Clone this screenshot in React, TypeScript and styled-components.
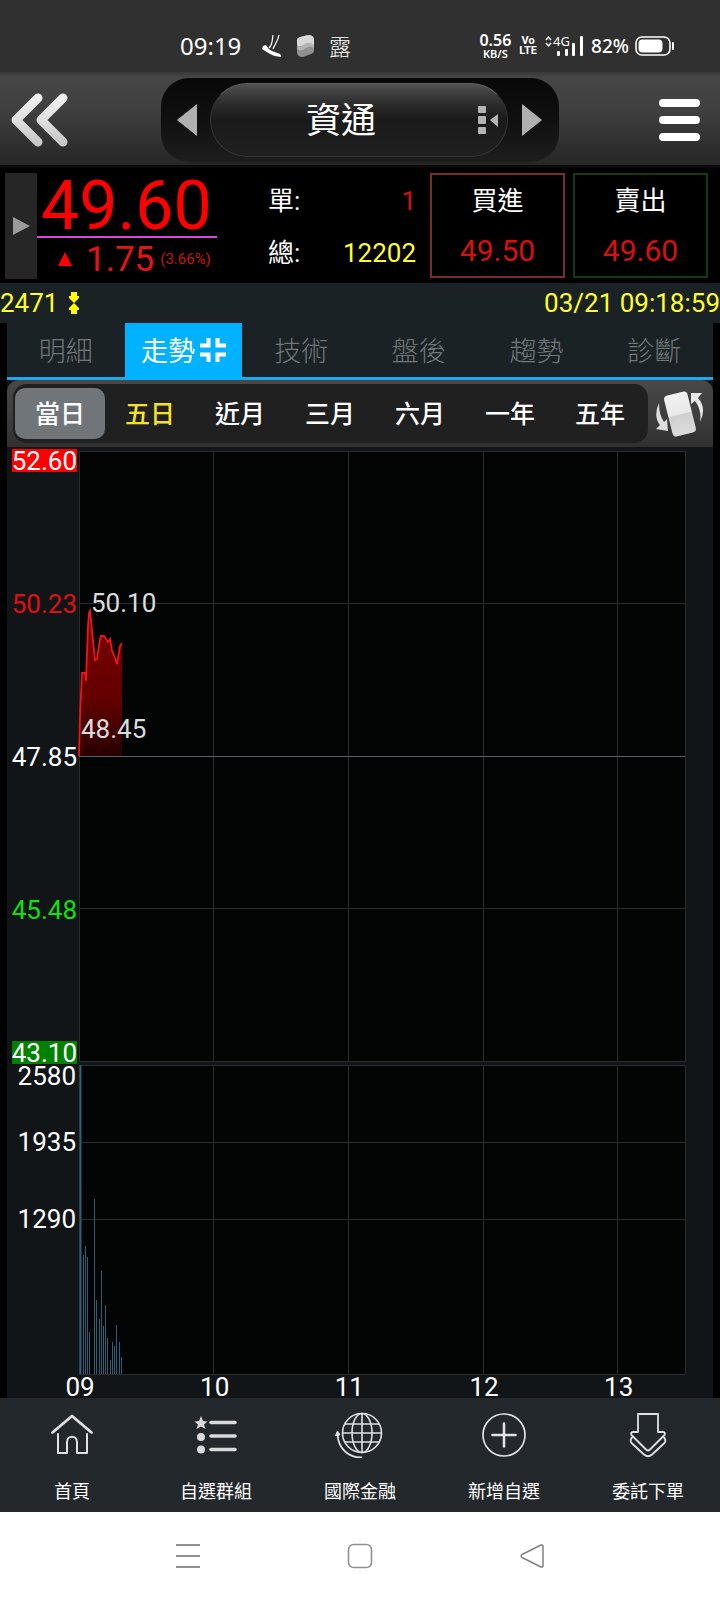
import React from "react";
import styled, { createGlobalStyle } from "styled-components";

const Global = createGlobalStyle`
  *, *::before, *::after { box-sizing: border-box; }
  body { margin: 0; background: #fff; }
  button { appearance: none; border: 0; padding: 0; margin: 0; background: none; color: inherit; font: inherit; cursor: pointer; }
  svg { display: block; flex: none; }
`;

const sans = `Roboto, "Noto Sans CJK TC", sans-serif`;

const Screen = styled.div`
  display: flex;
  flex-direction: column;
  min-height: 100vh;
  background: #000;
  color: #fff;
  font-family: ${sans};
`;

/* Status bar */
const StatusBar = styled.div`
  display: flex;
  align-items: flex-end;
  justify-content: space-between;
  height: 72px;
  padding: 0 46px 11px 180px;
  background: #303030;
  font-family: "Noto Sans", "Noto Sans CJK TC", sans-serif;
`;
const StatusGroup = styled.div<{ $gap: number }>`
  display: flex;
  align-items: center;
  gap: ${(p) => p.$gap}px;
  height: 30px;
`;
const Clock = styled.span`
  font-size: 24px;
  line-height: 30px;
  width: 68px;
`;
const Notice = styled.span`
  font-size: 22px;
  font-weight: 300;
  line-height: 30px;
`;
const Stack = styled.div`
  display: flex;
  flex-direction: column;
  align-items: center;
  font-weight: 600;
`;
const Small = styled.span<{ $size: number; $line: number }>`
  font-size: ${(p) => p.$size}px;
  line-height: ${(p) => p.$line}px;
`;
const Lte = styled(Stack)`
  font-family: "Liberation Sans Narrow", Roboto, sans-serif;
  font-weight: 700;
  font-size: 11px;
  line-height: 10px;
`;
const Signal = styled.div`
  display: flex;
  align-items: center;
  position: relative;
  width: 38px;
  height: 22px;
`;
const Network = styled.span`
  position: absolute;
  left: 8px;
  top: 0;
  font-size: 13px;
  line-height: 12px;
`;
const Battery = styled.div`
  display: flex;
  align-items: center;
  gap: 6px;
  font-size: 19px;
  font-weight: 500;
  line-height: 24px;
`;

/* Title bar */
const TitleBar = styled.header`
  display: grid;
  grid-template-columns: 1fr minmax(0, 398px) 1fr;
  align-items: center;
  height: 96px;
  border-bottom: 3px solid #0a0a0a;
  padding-top: 2px;
  background: linear-gradient(#383838, #464646 6%, #404040 40%, #262626);
`;
const IconButton = styled.button`
  display: flex;
`;
const BackButton = styled(IconButton)`
  justify-self: start;
  margin-left: 10px;
`;
const MenuButton = styled(IconButton)`
  justify-self: end;
  margin-right: 19px;
`;
const Well = styled.div`
  display: flex;
  align-items: center;
  justify-content: space-between;
  height: 84px;
  padding: 0 17px 0 16px;
  border-radius: 28px;
  background: linear-gradient(#080808, #121212 60%, #1e1e1e);
`;
const Pill = styled.button`
  display: flex;
  align-items: center;
  flex: 1;
  height: 74px;
  margin: 0 14px 0 13px;
  padding-right: 9px;
  border-radius: 37px;
  border: 1px solid #333;
  border-top-color: #606060;
  background: linear-gradient(#505050, #2c2c2c 28%, #1a1a1a 50%, #202020);
  font-size: 35px;
  line-height: 48px;
`;
const PillName = styled.span`
  flex: 1;
  margin-right: 7px;
  padding-top: 4px;
  text-align: center;
`;

/* Quote */
const Quote = styled.section`
  display: flex;
  height: 115px;
  padding: 5px 12px 4px 5px;
`;
const Handle = styled.button`
  display: flex;
  align-items: center;
  justify-content: center;
  width: 32px;
  background: #262626;
`;
const PriceBox = styled.div`
  width: 180px;
  color: #f00;
`;
const Price = styled.div`
  height: 65px;
  border-bottom: 2px solid #d848d8;
  padding-left: 4px;
  font-size: 68px;
  line-height: 66px;
`;
const Change = styled.div`
  display: flex;
  align-items: center;
  height: 42px;
  padding-left: 20px;
  color: #e81414;
`;
const ChangeValue = styled.span`
  margin: 0 6px 0 13px;
  font-size: 35px;
  line-height: 42px;
  padding-top: 2px;
`;
const Percent = styled.span`
  font-size: 15px;
  line-height: 20px;
  color: #c81414;
`;
const Volumes = styled.dl`
  flex: 1;
  display: flex;
  flex-direction: column;
  gap: 12px;
  margin: 0;
  padding: 8px 14px 0 51px;
  font-size: 26px;
  line-height: 40px;
`;
const VolumeRow = styled.div`
  display: flex;
  justify-content: space-between;
`;
const VolumeName = styled.dt``;
const VolumeValue = styled.dd<{ $color: string }>`
  margin: 0;
  color: ${(p) => p.$color};
`;
const Deal = styled.button<{ $border: string }>`
  display: flex;
  flex-direction: column;
  align-items: center;
  gap: 10px;
  width: 135px;
  height: 105px;
  padding-top: 6px;
  border: 2px solid ${(p) => p.$border};
  font-size: 26px;
  line-height: 40px;
  & + & { margin-left: 8px; }
`;
const DealPrice = styled.span`
  font-size: 30px;
  color: #d81010;
`;

const InfoBar = styled.div`
  display: flex;
  align-items: center;
  height: 40px;
  background: #1b2226;
  color: #ffff28;
  font-size: 26px;
  line-height: 40px;
`;
const Stamp = styled.time`
  margin-left: auto;
`;
const Code = styled.span`
  margin-right: 11px;
`;

/* Panel */
const Panel = styled.main`
  margin: 0 7px;
  background: #111518;
`;
const Tabs = styled.nav`
  display: flex;
  height: 57px;
  border-bottom: 3px solid #1eaaea;
  background: #1b2226;
`;
const Tab = styled.button<{ $on?: boolean }>`
  display: flex;
  flex: 1;
  align-items: center;
  justify-content: center;
  gap: 5px;
  height: ${(p) => (p.$on ? 57 : 54)}px;
  padding-bottom: ${(p) => (p.$on ? 3 : 0)}px;
  background: ${(p) => (p.$on ? "#00b2ff" : "none")};
  color: ${(p) => (p.$on ? "#fff" : "#70777a")};
  font-size: 27px;
  font-weight: ${(p) => (p.$on ? 400 : 300)};
  line-height: 40px;
`;
const TabText = styled.span`
  padding-top: 3px;
`;
const RangeBar = styled.div`
  display: flex;
  height: 67px;
  padding: 4px 8px 4px 6px;
  border-radius: 12px 12px 0 0;
  background: linear-gradient(#484848, #3c3c3c 60%, #303030);
`;
const Ranges = styled.div`
  display: flex;
  flex: 1;
  height: 59px;
  padding: 4px 3px 4px 2px;
  border-radius: 14px;
  background: #202020;
`;
const Range = styled.button<{ $on?: boolean; $color?: string }>`
  flex: 1;
  padding-top: 3px;
  border-radius: 10px;
  background: ${(p) => (p.$on ? "#70757a" : "none")};
  color: ${(p) => p.$color || "#fff"};
  font-size: 25px;
  font-weight: 500;
  line-height: 48px;
`;
const Rotate = styled.button`
  display: flex;
  align-items: center;
  margin-left: 7px;
`;

/* Chart */
const Chart = styled.section`
  display: grid;
  grid-template-columns: 72px 1fr 28px;
  padding-top: 2px;
  font-size: 26px;
`;
const Axis = styled.div`
  display: flex;
  flex-direction: column;
  align-items: flex-end;
  padding-right: 2px;
`;
const Tick = styled.div<{ $h: number; $at: string; $color?: string; $inset?: boolean }>`
  display: flex;
  align-items: ${(p) => p.$at};
  height: ${(p) => p.$h}px;
  padding-right: ${(p) => (p.$inset ? 1 : 0)}px;
  color: ${(p) => p.$color || "#fff"};
`;
const TickText = styled.span<{ $bg?: string }>`
  padding-top: 2px;
  line-height: 21px;
  background: ${(p) => p.$bg || "none"};
`;
const Plot = styled.div<{ $top: number }>`
  position: relative;
  grid-column: 2;
  padding-top: ${(p) => p.$top}px;
`;
const PlotSvg = styled.svg`
  width: 100%;
  overflow: visible;
`;
const Mark = styled.span<{ $x: number; $y: number }>`
  position: absolute;
  left: ${(p) => p.$x}px;
  top: ${(p) => p.$y}px;
  line-height: 24px;
  color: #dcdcdc;
`;
const Hours = styled.div`
  grid-column: 2;
  display: grid;
  grid-template-columns: repeat(4, 2fr) 1fr;
  height: 24px;
`;
const Hour = styled.span`
  width: 34px;
  margin-left: -16px;
  text-align: center;
  line-height: 27px;
`;

/* Bottom bars */
const BottomNav = styled.nav`
  display: flex;
  height: 114px;
  background: #23282c;
`;
const NavItem = styled.button`
  display: flex;
  flex: 1;
  flex-direction: column;
  align-items: center;
  padding-top: 14px;
  gap: 21px;
  color: #fff;
  font-size: 18px;
  line-height: 26px;
`;
const SystemNav = styled.nav`
  display: flex;
  justify-content: center;
  align-items: center;
  gap: 146px;
  height: 88px;
  background: #fff;
`;

const hourLines = [0, 134.67, 269.33, 404, 538.67, 606];

function Grid({ height, rows }: { height: number; rows: number[] }) {
  return (
    <g stroke="#292c2d" strokeWidth="1" shapeRendering="crispEdges">
      <rect x="0" y="0" width="606" height={height} fill="#030504" vectorEffect="non-scaling-stroke" />
      {hourLines.map((x) => (
        <line key={x} x1={x} x2={x} y1="0" y2={height} vectorEffect="non-scaling-stroke" />
      ))}
      {rows.map((y) => (
        <line key={y} x1="0" x2="606" y1={y} y2={y} vectorEffect="non-scaling-stroke" />
      ))}
    </g>
  );
}

const pricePath =
  "0,305 1,265 3,222 6,222 7,230 9,175 10,162 11,160 13,180 16,209 18,208 21,188 22,185 25,185 29,191 31,188 33,200 35,204 38,213 41,195 43,192";

const volumeBars = [
  [1, 309], [4, 119], [6, 128], [8, 117], [10, 42], [15, 175], [17, 74], [20, 55],
  [22, 103], [24, 48], [26, 69], [28, 36], [31, 14], [33, 32], [35, 28], [37, 49], [40, 32], [42, 17],
];

const navStroke = { fill: "none", stroke: "#dfe1e3", strokeWidth: 2 } as const;

const HomeIcon = () => (
  <svg width="46" height="46" viewBox="0 0 46 46" {...navStroke} strokeLinecap="round" strokeLinejoin="round">
    <path d="M3.500 20.500 23 4 42.500 20.500" strokeWidth="2.800" />
    <path d="M9 22V41H18V30C18 23 28 23 28 30V41H38V22" />
  </svg>
);
const ListIcon = () => (
  <svg width="46" height="46" viewBox="0 0 46 46" fill="#d8dadc">
    <path d="M8 4 10 9 14.500 9.500 11 12.500 12.500 17 8 14.500 3.500 17 5 12.500 1.500 9.500 6 9Z" />
    <circle cx="8" cy="25" r="4" />
    <circle cx="8" cy="37.500" r="4" />
    <path d="M18 10.500H42M18 24H42M18 37.500H42" stroke="#d8dadc" strokeWidth="3.600" strokeLinecap="round" />
  </svg>
);
const GlobeIcon = () => (
  <svg width="50" height="46" viewBox="0 0 50 46" {...navStroke} strokeWidth="1.600">
    <circle cx="27" cy="21" r="19.500" />
    <ellipse cx="27" cy="21" rx="10" ry="19.500" />
    <path d="M27 1.500V40.500M7.500 21H46.500M10 12H44M10 30H44" />
    <path d="M2.500 22C3 36 13 46 27 45.500" strokeWidth="1.800" />
    <path d="M0.500 23.500 2.500 19 5 23Z" fill="#dfe1e3" strokeWidth="1" />
  </svg>
);
const AddIcon = () => (
  <svg width="46" height="46" viewBox="0 0 46 46" {...navStroke}>
    <circle cx="23" cy="23" r="21" strokeWidth="1.700" />
    <path d="M23 11.500V34.500M11.500 23H34.500" strokeWidth="2.600" strokeLinecap="round" />
  </svg>
);
const OrderIcon = () => (
  <svg width="46" height="46" viewBox="0 0 46 46" {...navStroke} strokeWidth="1.800" strokeLinejoin="round" strokeLinecap="round">
    <path d="M13 2H33V20H38Q41 20.500 39.500 23L25 37.500Q23 39.500 21 37.500L6.500 23Q5 20.500 8 20H13Z" />
    <path d="M7 25.500Q4.500 28 6.500 31L19 42.500Q23 46 27 42.500L39.500 31Q41.500 28 39 25.500" />
  </svg>
);

const navItems: [string, () => React.JSX.Element][] = [
  ["首頁", HomeIcon],
  ["自選群組", ListIcon],
  ["國際金融", GlobeIcon],
  ["新增自選", AddIcon],
  ["委託下單", OrderIcon],
];

export default function App() {
  return (
    <Screen>
      <Global />
      <StatusBar>
        <StatusGroup $gap={13}>
          <Clock>09:19</Clock>
          <svg width="22" height="24" viewBox="0 0 22 24" fill="#fff">
            <path d="M2 12 5 11Q7 15 11 17L19 20Q21 22 20 23Q14 23 9 20L1 15Z" />
            <path d="M8 14C12 10 11 6 12 1M12 15C14 10 17 7 18 1" fill="none" stroke="#fff" strokeWidth="1.200" />
          </svg>
          <svg width="20" height="24" viewBox="0 0 20 24">
            <path d="M1 6Q1 4 4 3L12 1Q18 1 18 6V17Q18 19 15 20L7 23Q1 23 1 18Z" fill="#909090" />
            <path d="M1 6Q1 4 4 3L12 1Q18 1 18 6V12Q14 7 9 10Q3 14 1 11Z" fill="#d8d8d8" />
            <path d="M1 12Q4 14 9 10Q14 7 18 11V14Q14 11 10 14Q5 18 1 15Z" fill="#b4b4b4" />
          </svg>
          <Notice>露</Notice>
        </StatusGroup>
        <StatusGroup $gap={8}>
          <Stack>
            <Small $size={16} $line={16}>0.56</Small>
            <Small $size={11} $line={12}>KB/S</Small>
          </Stack>
          <Lte>
            <span>Vo</span>
            <span>LTE</span>
          </Lte>
          <Signal>
            <svg width="38" height="22" viewBox="0 0 38 22" fill="#fff">
              <path d="M1 5 3.500 2 6 5M1 8 3.500 11 6 8" fill="none" stroke="#fff" strokeWidth="1.400" />
              <rect x="12" y="16" width="3" height="5" rx="1" />
              <rect x="20" y="14" width="3" height="7" rx="1" />
              <rect x="27" y="8" width="3" height="13" rx="1" />
              <rect x="35" y="1" width="3" height="20" rx="1" />
            </svg>
            <Network>4G</Network>
          </Signal>
          <Battery>
            82%
            <svg width="39" height="22" viewBox="0 0 39 22" fill="#fff">
              <rect x="1" y="2" width="34" height="18" rx="6" fill="none" stroke="#fff" strokeWidth="1.600" />
              <rect x="3.500" y="4.500" width="24" height="13" rx="4" />
              <rect x="37" y="7" width="2" height="8" rx="1" />
            </svg>
          </Battery>
        </StatusGroup>
      </StatusBar>

      <TitleBar>
        <BackButton aria-label="返回">
          <svg width="60" height="56" viewBox="0 0 60 56" fill="none" stroke="url(#silver)" strokeWidth="9" strokeLinecap="round" strokeLinejoin="round">
            <defs>
              <linearGradient id="silver" x1="0" y1="0" x2="0" y2="1">
                <stop offset="0" stopColor="#f0f0f0" />
                <stop offset="0.500" stopColor="#e0e0e0" />
                <stop offset="1" stopColor="#c8c8c8" />
              </linearGradient>
            </defs>
            <path d="M28 6 6 28 28 50" />
            <path d="M53 6 31 28 53 50" />
          </svg>
        </BackButton>
        <Well>
          <IconButton aria-label="上一檔">
            <svg width="20" height="32" viewBox="0 0 20 32" fill="#b0b0b0"><path d="M20 0V32L0 16Z" /></svg>
          </IconButton>
          <Pill>
            <PillName>資通</PillName>
            <svg width="20" height="30" viewBox="0 0 20 30" fill="#b4b4b4">
              <rect x="0" y="1" width="8" height="7" rx="1" />
              <rect x="0" y="11" width="8" height="8" rx="1" />
              <rect x="0" y="22" width="8" height="7" rx="1" />
              <path d="M20 9V22L12 15Z" />
            </svg>
          </Pill>
          <IconButton aria-label="下一檔">
            <svg width="20" height="32" viewBox="0 0 20 32" fill="#b0b0b0"><path d="M0 0V32L20 16Z" /></svg>
          </IconButton>
        </Well>
        <MenuButton aria-label="選單">
          <svg width="42" height="44" viewBox="0 0 42 44" stroke="#fff" strokeWidth="8" strokeLinecap="round">
            <path d="M4 5H37M4 22H37M4 39H37" />
          </svg>
        </MenuButton>
      </TitleBar>

      <Quote>
        <Handle aria-label="展開">
          <svg width="18" height="18" viewBox="0 0 18 18" fill="#9a9a9a"><path d="M1 0V18L18 9Z" /></svg>
        </Handle>
        <PriceBox>
          <Price>49.60</Price>
          <Change>
            <svg width="16" height="16" viewBox="0 0 16 16" fill="#f00"><path d="M8 1 15 15H1Z" /></svg>
            <ChangeValue>1.75</ChangeValue>
            <Percent>(3.66%)</Percent>
          </Change>
        </PriceBox>
        <Volumes>
          <VolumeRow>
            <VolumeName>單:</VolumeName>
            <VolumeValue $color="#d81010">1</VolumeValue>
          </VolumeRow>
          <VolumeRow>
            <VolumeName>總:</VolumeName>
            <VolumeValue $color="#ffff28">12202</VolumeValue>
          </VolumeRow>
        </Volumes>
        <Deal $border="#7c2c2c">
          買進<DealPrice>49.50</DealPrice>
        </Deal>
        <Deal $border="#143c14">
          賣出<DealPrice>49.60</DealPrice>
        </Deal>
      </Quote>

      <InfoBar>
        <Code>2471</Code>
        <svg width="10" height="24" viewBox="0 0 10 24" fill="#ffff00">
          <path d="M2 1H8V5H10V7L5 12 0 7V5H2ZM2 23H8V19H10V17L5 12 0 17V19H2Z" />
        </svg>
        <Stamp>03/21 09:18:59</Stamp>
      </InfoBar>

      <Panel>
        <Tabs>
          <Tab><TabText>明細</TabText></Tab>
          <Tab $on>
            <TabText>走勢</TabText>
            <svg width="26" height="26" viewBox="0 0 26 26" fill="none" stroke="#fff" strokeWidth="4">
              <path d="M8.500 1V8.500H0M17.500 1V8.500H26M8.500 25V17.500H0M17.500 25V17.500H26" />
            </svg>
          </Tab>
          <Tab><TabText>技術</TabText></Tab>
          <Tab><TabText>盤後</TabText></Tab>
          <Tab><TabText>趨勢</TabText></Tab>
          <Tab><TabText>診斷</TabText></Tab>
        </Tabs>
        <RangeBar>
          <Ranges>
            <Range $on>當日</Range>
            <Range $color="#f4e428">五日</Range>
            <Range>近月</Range>
            <Range>三月</Range>
            <Range>六月</Range>
            <Range>一年</Range>
            <Range>五年</Range>
          </Ranges>
          <Rotate aria-label="旋轉">
            <svg width="50" height="50" viewBox="0 0 50 50">
              <defs>
                <linearGradient id="card" x1="0" y1="0" x2="0" y2="1">
                  <stop offset="0" stopColor="#f2f2f2" />
                  <stop offset="0.500" stopColor="#e8e8e8" />
                  <stop offset="0.520" stopColor="#cfcfcf" />
                  <stop offset="1" stopColor="#dcdcdc" />
                </linearGradient>
              </defs>
              <rect x="13" y="4" width="24" height="42" rx="4" transform="rotate(-14 25 25)" fill="url(#card)" />
              <path d="M4 14Q-2 27 5 36L1 40 13 42 12 30 9 33Q4 26 4 14Z" fill="#dedede" />
              <path d="M45 33Q52 19 43 9L47 4 36 4V15L40 12Q47 21 45 33Z" fill="#e8e8e8" />
            </svg>
          </Rotate>
        </RangeBar>

        <Chart>
          <Axis>
            <Tick $h={78} $at="flex-start"><TickText $bg="#f00">52.60</TickText></Tick>
            <Tick $h={153} $at="center" $color="#e01010"><TickText>50.23</TickText></Tick>
            <Tick $h={153} $at="center"><TickText>47.85</TickText></Tick>
            <Tick $h={153} $at="center" $color="#10e010"><TickText>45.48</TickText></Tick>
            <Tick $h={78} $at="flex-end"><TickText $bg="#008200">43.10</TickText></Tick>
          </Axis>
          <Plot $top={2}>
            <PlotSvg height="610" viewBox="0 0 606 610" preserveAspectRatio="none">
              <defs>
                <linearGradient id="fall" x1="0" y1="0" x2="0" y2="1">
                  <stop offset="0" stopColor="#780000" />
                  <stop offset="0.600" stopColor="#640000" />
                  <stop offset="1" stopColor="#280000" />
                </linearGradient>
              </defs>
              <Grid height={610} rows={[152.5, 457.5]} />
              <polygon points={`${pricePath} 43,305`} fill="url(#fall)" />
              <path d="M0 305H606" stroke="#56616a" shapeRendering="crispEdges" />
              <polyline points={pricePath} fill="none" stroke="#f01414" strokeWidth="1.800" vectorEffect="non-scaling-stroke" />
            </PlotSvg>
            <Mark $x={12} $y={142}>50.10</Mark>
            <Mark $x={2} $y={268}>48.45</Mark>
          </Plot>
          <div />
          <Axis>
            <Tick $h={39} $at="flex-start" $inset><TickText>2580</TickText></Tick>
            <Tick $h={77} $at="center" $inset><TickText>1935</TickText></Tick>
            <Tick $h={77} $at="center" $inset><TickText>1290</TickText></Tick>
          </Axis>
          <Plot $top={1}>
            <PlotSvg height="309" viewBox="0 0 606 309" preserveAspectRatio="none">
              <Grid height={309} rows={[77, 154]} />
              <g stroke="#2c6078">
                {volumeBars.map(([x, h]) => (
                  <line key={x} x1={x + 0.5} x2={x + 0.5} y1={309 - h} y2={309} strokeWidth={x === 1 ? 2 : 1} />
                ))}
              </g>
            </PlotSvg>
          </Plot>
          <div />
          <Hours>
            {["09", "10", "11", "12", "13"].map((h) => (
              <Hour key={h}>{h}</Hour>
            ))}
          </Hours>
        </Chart>
      </Panel>

      <BottomNav>
        {navItems.map(([label, Icon]) => (
          <NavItem key={label}>
            <Icon />
            {label}
          </NavItem>
        ))}
      </BottomNav>
      <SystemNav>
        <IconButton aria-label="最近">
          <svg width="26" height="26" viewBox="0 0 26 26" stroke="#909090" strokeWidth="2">
            <path d="M1 2H25M1 13H25M1 24H25" />
          </svg>
        </IconButton>
        <IconButton aria-label="主畫面">
          <svg width="26" height="26" viewBox="0 0 26 26" fill="none" stroke="#909090" strokeWidth="1.600">
            <rect x="1.500" y="1.500" width="23" height="23" rx="5" />
          </svg>
        </IconButton>
        <IconButton aria-label="上一頁">
          <svg width="26" height="26" viewBox="0 0 26 26" fill="none" stroke="#808080" strokeWidth="1.500" strokeLinejoin="round">
            <path d="M22 2Q24 1.500 24 3.500V22.500Q24 24.500 22 24L3 14.500Q1 13 3 11.500Z" />
          </svg>
        </IconButton>
      </SystemNav>
    </Screen>
  );
}
